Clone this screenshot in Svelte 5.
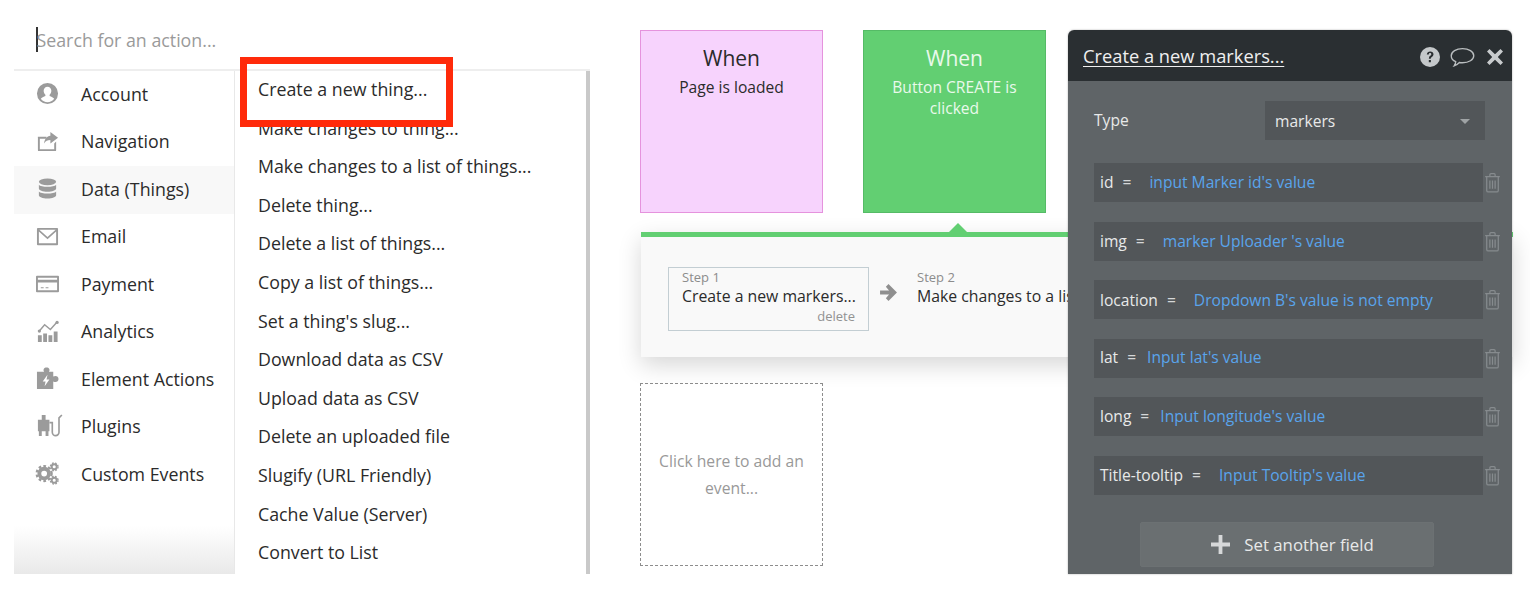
<script>
	const categories = ['Account', 'Navigation', 'Data (Things)', 'Email', 'Payment', 'Analytics', 'Element Actions', 'Plugins', 'Custom Events'];
	const actions = [
		'Create a new thing...',
		'Make changes to thing...',
		'Make changes to a list of things...',
		'Delete thing...',
		'Delete a list of things...',
		'Copy a list of things...',
		"Set a thing's slug...",
		'Download data as CSV',
		'Upload data as CSV',
		'Delete an uploaded file',
		'Slugify (URL Friendly)',
		'Cache Value (Server)',
		'Convert to List'
	];
	const fields = [
		{ name: 'id', gap: 'g1', value: "input Marker id's value" },
		{ name: 'img', gap: 'g2', value: "marker Uploader 's value" },
		{ name: 'location', gap: 'g2', value: "Dropdown B's value is not empty" },
		{ name: 'lat', gap: 'g3', value: "Input lat's value" },
		{ name: 'long', gap: 'g3', value: "Input longitude's value" },
		{ name: 'Title-tooltip', gap: 'g2', value: "Input Tooltip's value" }
	];
</script>

<div class="page">
	<section class="menu">
		<div class="search"><span class="caret"></span><span class="placeholder">Search for an action...</span></div>
		<div class="columns">
			<ul class="cats">
				{#each categories as cat, i}
					<li class:active={i === 2}>
						<svg class="icon" viewBox="0 0 24 24" fill="#9b9b9b">
							{#if i === 0}
								<path fill-rule="evenodd" d="M12 1a11 11 0 1 0 0 22 11 11 0 0 0 0-22zM12 5c2.400 0 4 1.800 4 4.200 0 1.800-.8 3.300-1.800 4.200v1.200c1.800.7 4 1.500 4.800 3a8.800 8.800 0 0 1-14 0c.8-1.500 3-2.300 4.800-3v-1.200C8.800 12.500 8 11 8 9.200 8 6.800 9.600 5 12 5z" />
							{:else if i === 1}
								<path d="M2 7h9v2H4v11h15v-6l2-2v9a1 1 0 0 1-1 1H3a1 1 0 0 1-1-1V8a1 1 0 0 1 0-1z" />
								<path d="M15 2l8 6-8 6v-3.500c-3 0-5 1-6.500 3.500.3-4.500 2.800-7.500 6.500-8z" />
							{:else if i === 2}
								<ellipse cx="12" cy="5" rx="9" ry="3.500" />
								<path d="M3 8c2 3 16 3 18 0v4c0 1.800-4 3.500-9 3.500S3 13.800 3 12z" />
								<path d="M3 15c2 3 16 3 18 0v4c0 1.800-4 3.500-9 3.500S3 20.800 3 19z" />
							{:else if i === 3}
								<path fill-rule="evenodd" d="M2 3h20a1 1 0 0 1 1 1v16a1 1 0 0 1-1 1H2a1 1 0 0 1-1-1V4a1 1 0 0 1 1-1zm1.500 2L12 12.500 20.500 5zM3 6.800V19h18V6.800l-9 8z" />
							{:else if i === 4}
								<path fill-rule="evenodd" d="M1 4h22a1 1 0 0 1 1 1v15a1 1 0 0 1-1 1H1a1 1 0 0 1-1-1V5a1 1 0 0 1 1-1zm1 2v2h20V6zm0 5v8h20v-8zm3 5h3v1H5zm5 0h3v1h-3z" />
							{:else if i === 5}
								<path d="M2 16h4v7H2zm5.500-2h4v9h-4zm5.500 2h4v7h-4zm5.500-4h4v11h-4z" />
								<path d="M3.500 11.500L9 5l6 5 7-8" fill="none" stroke="#9b9b9b" stroke-width="1.500" />
								<circle cx="3.500" cy="11.500" r="1.700" /><circle cx="22" cy="2.500" r="1.700" />
							{:else if i === 6}
								<path fill-rule="evenodd" d="M1 5h7.500C7 2.500 8.500.5 11 .5s4 2 2.500 4.500H18v5c2.500-1.500 5.500-.5 5.500 2.500S20.500 16.500 18 15v8H1zm11 3l-5 7h3l-1 5 5-7h-3z" />
							{:else if i === 7}
								<path d="M2 5h4V0h4v5h4v12h-1v5h-3v-5H6v5H3v-5H2z" />
								<path d="M14 8h3v10a3.500 3.500 0 0 0 7 0V3l3-3" fill="none" stroke="#9b9b9b" stroke-width="1.700" />
							{:else}
								<circle cx="8.500" cy="12" r="5" fill="none" stroke="#9b9b9b" stroke-width="4" />
								<circle cx="8.500" cy="12" r="7.800" fill="none" stroke="#9b9b9b" stroke-width="2.400" stroke-dasharray="2.800 2.300" />
								<circle cx="19" cy="5" r="2.600" fill="none" stroke="#9b9b9b" stroke-width="2" />
								<circle cx="19" cy="5" r="4" fill="none" stroke="#9b9b9b" stroke-width="1.400" stroke-dasharray="1.800 1.400" />
								<circle cx="19" cy="19" r="2.600" fill="none" stroke="#9b9b9b" stroke-width="2" />
								<circle cx="19" cy="19" r="4" fill="none" stroke="#9b9b9b" stroke-width="1.400" stroke-dasharray="1.800 1.400" />
							{/if}
						</svg>
						<span>{cat}</span>
					</li>
				{/each}
			</ul>
			<ul class="actions">
				{#each actions as action}
					<li>{action}</li>
				{/each}
			</ul>
		</div>
		<div class="highlight"></div>
	</section>

	<section class="canvas">
		<div class="cards">
			<div class="card pink"><h3>When</h3><p>Page is loaded</p></div>
			<div class="card green"><h3>When</h3><p>Button CREATE is clicked</p></div>
		</div>
		<div class="band">
			<div class="notch"></div>
			<div class="step selected">
				<small>Step 1</small>
				<span>Create a new markers...</span>
				<em>delete</em>
			</div>
			<svg class="arrow" viewBox="0 0 18 18" fill="#8f8f8f"><path d="M9 1l8 8-8 8-2.500-2.500L9.500 11H1V7h8.500L6.500 3.500z" /></svg>
			<div class="step next">
				<small>Step 2</small>
				<span>Make changes to a list of things...</span>
			</div>
		</div>
		<div class="add-event">Click here to add an event...</div>
	</section>

	<aside class="panel">
		<header>
			<span class="title">Create a new markers...</span>
			<svg class="hd-icon help" viewBox="0 0 20 20"><circle cx="10" cy="10" r="10" fill="#c4c8ca" /><path d="M6.800 7.500C7 5.500 8.300 4.400 10.200 4.400c2 0 3.300 1.200 3.300 2.800 0 1.300-.7 2-1.700 2.700-.8.600-1 .9-1 1.900H8.900c0-1.600.3-2.200 1.300-3 .8-.6 1.100-1 1.100-1.600 0-.7-.5-1.100-1.200-1.100-.8 0-1.200.5-1.300 1.400zM8.800 13h2.100v2.300H8.800z" fill="#2a2f32" /></svg>
			<svg class="hd-icon chat" viewBox="0 0 24 20"><path d="M12 1.500c6 0 10.800 2.900 10.800 6.800S18 15 12 15c-1 0-2 0-3-.2-1.200 1.300-3 2.700-5 3.200.9-1.200 1.400-2.500 1.500-4C2.800 12.900 1.200 10.800 1.200 8.300 1.200 4.400 6 1.500 12 1.500z" fill="none" stroke="#b9bdbf" stroke-width="1.300" /></svg>
			<svg class="hd-icon close" viewBox="0 0 16 16"><path d="M2.500 0L8 5.200 13.500 0 16 2.600 10.800 8 16 13.400 13.500 16 8 10.800 2.500 16 0 13.400 5.200 8 0 2.600z" fill="#c8cbcd" /></svg>
		</header>
		<div class="panel-body">
			<div class="type-row">
				<label for="type-select">Type</label>
				<div class="select" id="type-select"><span>markers</span><i></i></div>
			</div>
			{#each fields as f}
				<div class="field">
					<div class="field-box" class:low={f.gap === 'g2'}>
						<span class="fname">{f.name}</span><span class="eq {f.gap}">=</span><span class="fval">{f.value}</span>
					</div>
					<svg class="trash" viewBox="0 0 16 20" fill="none" stroke="#868b8e" stroke-width="1.200"><path d="M1 4.500h14M5.500 4.500V2.500a1 1 0 0 1 1-1h3a1 1 0 0 1 1 1v2M2.500 4.500v13a1.500 1.500 0 0 0 1.500 1.500h8a1.500 1.500 0 0 0 1.500-1.500v-13M5.500 8v8M8 8v8M10.500 8v8" /></svg>
				</div>
			{/each}
			<button class="another">
				<svg viewBox="0 0 20 20" fill="#d6d8d9"><path d="M8 0h4v8h8v4h-8v8H8v-8H0V8h8z" /></svg>
				<span>Set another field</span>
			</button>
		</div>
	</aside>
</div>

<style>
	:global(body) {
		margin: 0;
		background: #fff;
	}

	.page {
		position: relative;
		display: flex;
		width: 1530px;
		height: 600px;
		overflow: hidden;
		font-family: 'Open Sans', sans-serif;
		color: #2b2b2b;
	}

	ul {
		list-style: none;
		margin: 0;
		padding: 0;
	}

	.menu {
		position: relative;
		flex: none;
		width: 576px;
		height: 574px;
		margin-left: 14px;
		display: flex;
		flex-direction: column;
	}

	.search {
		flex: none;
		display: flex;
		align-items: center;
		padding: 10px 0 0 22px;
		box-sizing: border-box;
		border-bottom: 2px solid #eee;
		height: 71px;
		font-size: 17.800px;
		color: #9a9a9a;
	}

	.caret {
		width: 1.500px;
		height: 25px;
		margin-right: -1px;
		background: #333;
	}

	.columns {
		flex: 1;
		min-height: 0;
		display: flex;
	}

	.cats {
		flex: none;
		width: 220px;
		background: linear-gradient(to bottom, #fff 0, #fff 455px, #e9e9e9 503px);
	}

	.cats li {
		height: 47.500px;
		box-sizing: border-box;
		padding-bottom: 2px;
		display: flex;
		align-items: center;
		font-size: 17.800px;
	}

	.cats li.active {
		background: #f8f8f8;
	}

	.icon {
		width: 23px;
		height: 23px;
		margin: 0 22px;
		flex: none;
		overflow: visible;
	}

	.actions {
		flex: 1;
		min-width: 0;
		border-left: 1px solid #e8e8e8;
		border-right: 4px solid #c9c9c9;
		overflow: hidden;
		background: #fff;
	}

	.actions li {
		height: 38.600px;
		padding-left: 23px;
		font-size: 17.800px;
		line-height: 36.600px;
		white-space: nowrap;
	}

	.highlight {
		position: absolute;
		left: 226px;
		top: 57px;
		width: 199px;
		height: 56px;
		border: 7px solid #ff2a0a;
	}

	.canvas {
		flex: none;
		width: 478px;
		margin-left: 50px;
		display: flex;
		flex-direction: column;
		padding-top: 30px;
		box-sizing: border-box;
	}

	.cards {
		display: flex;
		gap: 40px;
	}

	.card {
		width: 183px;
		height: 183px;
		box-sizing: border-box;
		text-align: center;
		padding: 0 12px;
	}

	.card h3 {
		margin: 12px 0 0;
		font-size: 21px;
		line-height: 30px;
		font-weight: 400;
	}

	.card p {
		margin: 4px 0 0;
		font-size: 15.600px;
		line-height: 21px;
	}

	.pink {
		background: #f7d3fd;
		border: 1.500px solid #e593dd;
	}

	.green {
		background: #62cf72;
		border: 1.500px solid #55bb66;
		color: #e9f9eb;
	}

	.band {
		position: relative;
		flex: none;
		display: flex;
		align-items: flex-start;
		width: 872px;
		height: 125px;
		margin: 19px 0 0 1px;
		padding: 30px 0 0 27px;
		box-sizing: border-box;
		border-top: 5px solid #62cf72;
		background: #f9f9f9;
		box-shadow: 0 8px 22px rgba(0, 0, 0, 0.16);
		white-space: nowrap;
	}

	.notch {
		position: absolute;
		left: 308px;
		top: -14px;
		width: 0;
		height: 0;
		border: 9px solid transparent;
		border-top: 0;
		border-bottom-color: #62cf72;
	}

	.step {
		display: flex;
		flex-direction: column;
		width: 201px;
		height: 64px;
		padding: 0.500px 13px;
		box-sizing: border-box;
		flex: none;
	}

	.step.selected {
		border: 1.500px solid #c3ced3;
	}

	.step.next {
		padding: 2px 0 0;
	}

	.step small {
		font-size: 13px;
		line-height: 17px;
		color: #8c8c8c;
	}

	.step span {
		font-size: 15.800px;
		line-height: 20px;
	}

	.step em {
		font-style: normal;
		font-size: 13px;
		line-height: 20px;
		color: #929292;
		text-align: right;
	}

	.arrow {
		width: 19px;
		height: 19px;
		margin: 16px 19px 0 10px;
		flex: none;
	}

	.add-event {
		flex: none;
		width: 183px;
		height: 183px;
		margin-top: 26px;
		box-sizing: border-box;
		display: flex;
		align-items: center;
		padding: 0 14px;
		text-align: center;
		border: 1.500px dashed #8d8d8d;
		font-size: 15.700px;
		line-height: 27px;
		color: #999;
	}

	.panel {
		position: absolute;
		left: 1068px;
		top: 30px;
		width: 444px;
		height: 544px;
		display: flex;
		flex-direction: column;
		border-radius: 6px 6px 0 0;
		overflow: hidden;
		box-shadow: 0 0 2px rgba(0, 0, 0, 0.35);
		color: #e8e9e9;
	}

	.panel header {
		flex: none;
		height: 51px;
		display: flex;
		align-items: center;
		padding-left: 15px;
		background: #2a2f32;
	}

	.title {
		flex: 1;
		font-size: 18.300px;
		text-decoration: underline;
		text-underline-offset: 3px;
		text-decoration-thickness: 1px;
		color: #f0f0f0;
	}

	.hd-icon {
		flex: none;
	}

	.help {
		width: 20px;
		height: 20px;
		margin-top: 3px;
	}

	.chat {
		width: 25px;
		height: 21px;
		margin: 4px 0 0 10px;
	}

	.close {
		width: 16px;
		height: 16px;
		margin: 3px 9px 0 12px;
	}

	.panel-body {
		flex: 1;
		min-height: 0;
		padding: 20px 0 0 26px;
		background: #5f6467;
	}

	.type-row {
		display: flex;
		align-items: center;
		height: 39px;
		margin-bottom: 23px;
		font-size: 15.600px;
	}

	.type-row label {
		width: 171px;
		margin-top: -2px;
	}

	.select {
		position: relative;
		width: 220px;
		height: 39px;
		display: flex;
		align-items: center;
		padding-left: 10px;
		box-sizing: border-box;
		background: #525659;
	}

	.select i {
		position: absolute;
		right: 15px;
		top: 18px;
		border: 5.500px solid transparent;
		border-top-color: #9fa3a5;
		border-bottom: 0;
	}

	.field {
		display: flex;
		align-items: center;
		height: 39px;
		margin-bottom: 19.500px;
	}

	.field-box {
		width: 389px;
		height: 39px;
		display: flex;
		align-items: center;
		padding: 0 0 2px 6px;
		box-sizing: border-box;
		background: #525659;
		font-size: 15.600px;
		white-space: nowrap;
	}

	.field-box.low {
		padding-bottom: 0;
	}

	.eq {
		margin-left: 9px;
		color: #d5d7d8;
	}

	.eq.g1,
	.eq.g2 {
		margin-right: 18px;
	}

	.eq.g3 {
		margin-right: 11px;
	}

	.fval {
		color: #59a4ec;
	}

	.trash {
		width: 17px;
		height: 21px;
		margin-left: 1px;
		flex: none;
	}

	.another {
		display: flex;
		align-items: center;
		justify-content: center;
		gap: 14px;
		width: 294px;
		height: 45px;
		margin: 27.500px 0 0 46px;
		padding: 0 0 0 11px;
		border: 1px solid #6c7173;
		border-radius: 2px;
		background: #6a6f71;
		color: #e8e9e9;
		font-family: inherit;
		font-size: 16.800px;
	}

	.another svg {
		width: 19px;
		height: 19px;
	}
</style>
